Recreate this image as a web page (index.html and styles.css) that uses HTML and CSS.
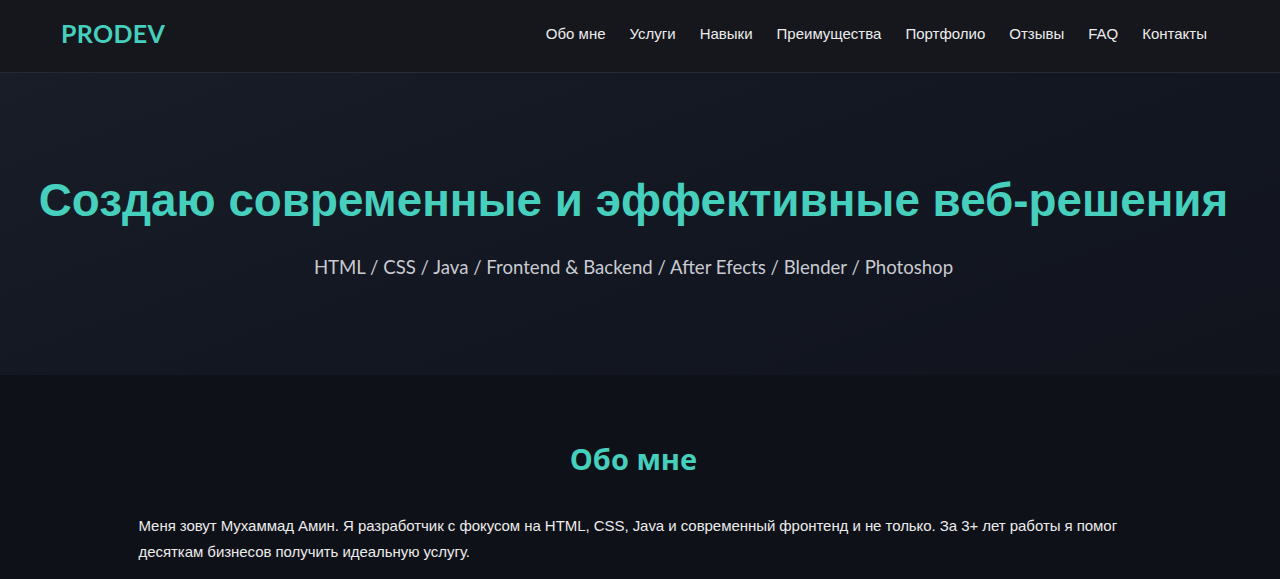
FILE: index.html
```html
<!DOCTYPE html>
<html lang="ru">
<head>
<meta charset="utf-8">
<title>PRODEV</title>
<link rel="stylesheet" href="styles.css">
</head>
<body>
<header class="header">
  <div class="logo">PRODEV</div>
  <nav class="nav">
    <a href="#">Обо мне</a>
    <a href="#">Услуги</a>
    <a href="#">Навыки</a>
    <a href="#">Преимущества</a>
    <a href="#">Портфолио</a>
    <a href="#">Отзывы</a>
    <a href="#">FAQ</a>
    <a href="#">Контакты</a>
  </nav>
</header>
<section class="hero">
  <h1 class="hero-title">Создаю современные и эффективные веб-решения</h1>
  <p class="hero-sub">HTML / CSS / Java / Frontend &amp; Backend / After Efects / Blender / Photoshop</p>
</section>
<section class="about">
  <div class="about-inner">
    <h2 class="section-title">Обо мне</h2>
    <p class="about-text">Меня зовут Мухаммад Амин. Я разработчик с фокусом на HTML, CSS, Java и современный фронтенд и не только. За 3+ лет работы я помог десяткам бизнесов получить идеальную услугу.</p>
  </div>
</section>
</body>
</html>
```
FILE: styles.css
```css
html, body {
  margin: 0;
  padding: 0;
}
body {
  background: #0f1118;
  color: #e6e6e6;
  font-family: "Liberation Sans", Arial, sans-serif;
  overflow: hidden;
}
.header {
  background: #16171d;
  border-bottom: 1px solid #262a33;
  display: flex;
  align-items: center;
  justify-content: space-between;
  padding: 0 73px 6px 61px;
  box-sizing: border-box;
  height: 73px;
}
.logo {
  font-family: "Lato", sans-serif;
  font-weight: 700;
  font-size: 25px;
  color: #45cfbc;
  letter-spacing: 0.3px;
}
.nav {
  display: flex;
  gap: 24px;
}
.nav a {
  color: #ececec;
  text-decoration: none;
  font-size: 15px;
}
.hero {
  height: 302px;
  background: linear-gradient(160deg, #191d28 0%, #131722 50%, #11141d 100%);
  display: flex;
  flex-direction: column;
  align-items: center;
  padding: 102px 13px 0 0;
  box-sizing: border-box;
}
.hero-title {
  margin: 0;
  font-family: "Liberation Sans", Arial, sans-serif;
  font-weight: 700;
  font-size: 45.8px;
  color: #45cfbc;
  line-height: 52px;
}
.hero-sub {
  margin: 29px 0 0;
  font-family: "Lato", sans-serif;
  font-size: 18.6px;
  color: #c9cbd1;
}
.about {
  padding: 64px 13px 0 0;
}
.about-inner {
  max-width: 990px;
  margin: 0 auto;
}
.section-title {
  margin: 0;
  text-align: center;
  font-family: "Open Sans", sans-serif;
  font-weight: 700;
  font-size: 29px;
  color: #45cfbc;
  line-height: 40px;
}
.about-text {
  margin: 34px 0 0;
  font-size: 15px;
  line-height: 26px;
  letter-spacing: -0.05px;
  color: #ececec;
}
```
